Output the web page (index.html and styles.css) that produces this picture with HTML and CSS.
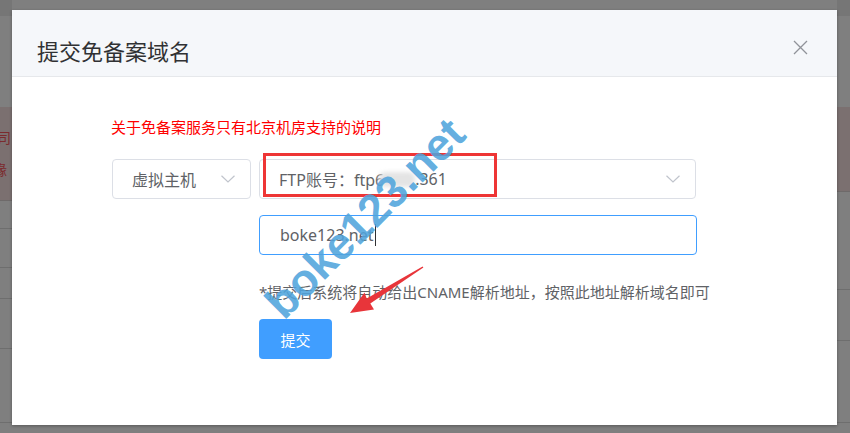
FILE: index.html
```html
<!DOCTYPE html>
<html lang="zh-CN">
<head>
<meta charset="utf-8">
<title>提交免备案域名</title>
<link rel="stylesheet" href="styles.css">
</head>
<body>
<div class="page">
  <div class="side side-left">
    <div class="topbar"></div>
    <div class="gap"></div>
    <div class="band band-left"><span class="frag f1">司</span><span class="frag f2">缘</span></div>
    <div class="trow h28"></div>
    <div class="trow h39"></div>
    <div class="trow h31"></div>
    <div class="trow h50"></div>
    <div class="trow h74"></div>
  </div>
  <div class="mid"></div>
  <div class="side side-right">
    <div class="topbar"></div>
    <div class="gap"></div>
    <div class="band band-right"></div>
    <div class="trow h98"></div>
    <div class="trow h51"></div>
    <div class="trow h82"></div>
  </div>
</div>

<div class="dialog">
  <div class="dialog-header">
    <span class="dialog-title">提交免备案域名</span>
    <button class="dialog-close" aria-label="close">
      <svg width="15" height="15" viewBox="0 0 15 15"><path d="M1 1L14 14M14 1L1 14" stroke="#909399" stroke-width="1.3" fill="none"/></svg>
    </button>
  </div>
  <div class="dialog-body">
    <div class="form">
      <a class="notice">关于免备案服务只有北京机房支持的说明</a>
      <div class="select-row">
        <div class="select select-type">
          <span class="select-text">虚拟主机</span>
          <svg class="chevron" width="14" height="8" viewBox="0 0 14 8"><path d="M0.5 0.8L7 7L13.5 0.8" stroke="#c0c4cc" stroke-width="1.2" fill="none"/></svg>
        </div>
        <div class="select select-ftp">
          <span class="select-text">FTP账号：ftp6<span class="blur"></span>.361</span>
          <svg class="chevron" width="14" height="8" viewBox="0 0 14 8"><path d="M0.5 0.8L7 7L13.5 0.8" stroke="#c0c4cc" stroke-width="1.2" fill="none"/></svg>
        </div>
      </div>
      <div class="indent">
        <div class="input">boke123.net<span class="caret"></span></div>
        <p class="tip">*提交后系统将自动给出CNAME解析地址，按照此地址解析域名即可</p>
        <button class="btn-primary">提交</button>
      </div>
    </div>
  </div>
  <div class="annot-box"></div>
  <div class="watermark">boke123.net</div>
  <svg class="arrow" width="100" height="70" viewBox="0 0 100 70">
    <polygon points="8,53 32,49.5 28.3,43.6 81.4,7.6 80.6,6.4 24.7,38.5 22.5,32.5" fill="#e8353a"/>
  </svg>
</div>
</body>
</html>
```

FILE: styles.css
```css
* { box-sizing: border-box; }
html, body { margin: 0; padding: 0; }
body {
  width: 850px;
  height: 433px;
  overflow: hidden;
  background: #7f7f7f;
  font-family: "Noto Sans", "Noto Sans CJK SC", sans-serif;
  position: relative;
}

/* background page seen through mask */
.page {
  display: flex;
  height: 433px;
}
.side { display: flex; flex-direction: column; overflow: hidden; }
.side-left { width: 12px; }
.side-right { width: 13px; }
.mid { flex: 1; }
.topbar { height: 16px; background: #767676; flex: none; }
.gap { height: 91px; flex: none; }
.band {
  flex: none;
  background: #7b7070;
  border-bottom: 1px solid #6e6a6a;
  display: flex;
  flex-direction: column;
}
.band-left { height: 94px; }
.band-right { height: 85px; }
.frag {
  color: #7b2b2e;
  font-size: 14px;
  line-height: 20px;
  white-space: nowrap;
  font-family: "Noto Sans CJK SC", sans-serif;
}
.f1 { margin: 20px 0 0 -3px; }
.f2 { margin: 12px 0 0 -7px; }
.trow { flex: none; border-bottom: 1px solid #6e6e6e; }
.h28 { height: 28px; }
.h39 { height: 39px; }
.h31 { height: 31px; }
.h50 { height: 50px; }
.h74 { height: 74px; }
.h98 { height: 98px; }
.h51 { height: 51px; }
.h82 { height: 82px; }

/* dialog */
.dialog {
  position: absolute;
  left: 12px;
  top: 10px;
  width: 825px;
  height: 415px;
  background: #fff;
  box-shadow: 0 1px 3px rgba(0, 0, 0, 0.3);
  overflow: hidden;
}
.dialog-header {
  height: 67px;
  background: #f5f7fa;
  border-bottom: 1px solid #e6e8eb;
  padding: 28px 25px 0;
  position: relative;
}
.dialog-title {
  font-family: "Noto Sans CJK SC", sans-serif;
  font-size: 22px;
  line-height: 24px;
  color: #303133;
  display: block;
}
.dialog-close {
  position: absolute;
  left: 781px;
  top: 30px;
  width: 15px;
  height: 15px;
  padding: 0;
  border: 0;
  background: none;
  display: block;
}
.dialog-close svg { display: block; }

.dialog-body {
  padding: 40px 0 0 99px;
}
.form { display: flex; flex-direction: column; align-items: flex-start; }
.notice {
  color: #ff0000;
  font-family: "Noto Sans CJK SC", sans-serif;
  font-size: 15px;
  line-height: 20px;
}
.select-row {
  display: flex;
  gap: 8px;
  margin: 22px 0 0 1px;
}
.select {
  height: 40px;
  border: 1px solid #dcdfe6;
  border-radius: 4px;
  display: flex;
  align-items: center;
  justify-content: space-between;
  padding: 0 15px 0 19px;
  color: #606266;
  font-size: 16px;
}
.select-type { width: 139px; }
.select-ftp { width: 437px; padding-left: 19px; }
.select-text { white-space: nowrap; display: flex; align-items: center; }
.chevron { display: block; flex: none; }
.blur {
  display: inline-block;
  width: 36px;
  height: 15px;
  margin-left: -5px;
  background: #e4e4e4;
  border-radius: 6px;
  filter: blur(2px);
}

.indent {
  margin-left: 148px;
  display: flex;
  flex-direction: column;
  align-items: flex-start;
}
.input {
  margin-top: 16px;
  width: 438px;
  height: 40px;
  border: 1px solid #409eff;
  border-radius: 4px;
  padding: 0 0 0 20px;
  display: flex;
  align-items: center;
  font-size: 16px;
  color: #606266;
}
.caret {
  width: 1px;
  height: 22px;
  background: #303133;
  margin-left: 1px;
}
.tip {
  margin: 26px 0 0;
  font-family: "Noto Sans", "Noto Sans CJK SC", sans-serif;
  font-size: 15px;
  line-height: 22px;
  color: #606266;
  white-space: nowrap;
}
.btn-primary {
  margin-top: 16px;
  width: 73px;
  height: 40px;
  border: 0;
  border-radius: 4px;
  background: #409eff;
  color: #fff;
  font-family: "Noto Sans CJK SC", sans-serif;
  font-size: 15px;
  padding: 0;
}

/* screenshot annotations drawn over the form */
.annot-box {
  position: absolute;
  left: 251px;
  top: 143px;
  width: 234px;
  height: 44px;
  border: 3px solid #ee3535;
}
.watermark {
  position: absolute;
  left: 353px;
  top: 208px;
  transform: translate(-50%, -50%) rotate(-45deg);
  font-family: "Liberation Sans", sans-serif;
  font-weight: bold;
  font-size: 45px;
  line-height: 1;
  color: rgba(80, 164, 220, 0.88);
  white-space: nowrap;
}
.arrow {
  position: absolute;
  left: 330px;
  top: 250px;
  display: block;
}
```
